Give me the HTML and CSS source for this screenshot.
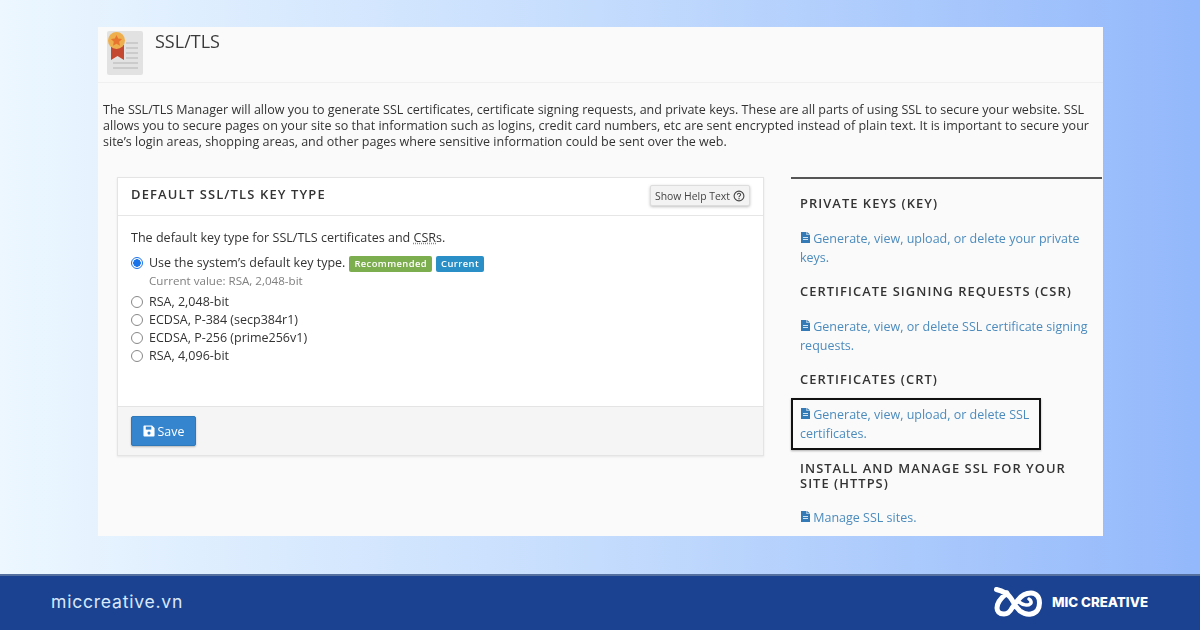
FILE: index.html
```html
<!DOCTYPE html>
<html lang="en">
<head>
<meta charset="utf-8">
<title>SSL/TLS</title>
<link rel="stylesheet" href="styles.css">
</head>
<body>
<main class="stage">
  <div class="shot">
    <header class="page-head">
      <svg class="cert-icon" width="36" height="44" viewBox="0 0 36 44">
        <rect width="36" height="44" rx="2" fill="#e2e2e2"/>
        <path d="M19 12h12M19 17h12M19 22h12M19 27h12M6 32h25M6 37h25" stroke="#b4b4b4" stroke-width="1"/>
        <path d="M4 14v15l6.500-4 6.500 4V14z" fill="#c4472f"/>
        <circle cx="9.500" cy="9.500" r="8.500" fill="#eeb04e"/>
        <path d="M9.500 4l1.700 3.600 3.900.5-2.900 2.700.8 3.900-3.500-1.900L6 14.700l.8-3.900-2.900-2.700 3.900-.5z" fill="#e8752f"/>
      </svg>
      <h1 class="page-title">SSL/TLS</h1>
    </header>
    <p class="intro">The SSL/TLS Manager will allow you to generate SSL certificates, certificate signing requests, and private keys. These are all parts of using SSL to secure your website. SSL allows you to secure pages on your site so that information such as logins, credit card numbers, etc are sent encrypted instead of plain text. It is important to secure your site’s login areas, shopping areas, and other pages where sensitive information could be sent over the web.</p>
    <div class="columns">
      <section class="card">
        <div class="card-head">
          <h2 class="card-title">DEFAULT SSL/TLS KEY TYPE</h2>
          <button class="help-btn" type="button">Show Help Text
            <svg width="12" height="12" viewBox="0 0 12 12"><circle cx="6" cy="6" r="4.900" fill="none" stroke="#444" stroke-width="1.100"/><path d="M4.400 4.800c0-2 3.200-2 3.200-.1 0 1.200-1.600 1.200-1.600 2.500" fill="none" stroke="#444" stroke-width="1.100"/><circle cx="6" cy="8.700" r=".7" fill="#444"/></svg>
          </button>
        </div>
        <div class="card-body">
          <p class="lead">The default key type for SSL/TLS certificates and <abbr class="abbr">CSR</abbr>s.</p>
          <div class="option">
            <span class="radio radio-on"></span>
            <span>Use the system’s default key type.</span>
            <span class="badge badge-green">Recommended</span>
            <span class="badge badge-blue">Current</span>
          </div>
          <div class="current">Current value: RSA, 2,048-bit</div>
          <div class="option"><span class="radio"></span><span>RSA, 2,048-bit</span></div>
          <div class="option"><span class="radio"></span><span>ECDSA, P-384 (secp384r1)</span></div>
          <div class="option"><span class="radio"></span><span>ECDSA, P-256 (prime256v1)</span></div>
          <div class="option"><span class="radio"></span><span>RSA, 4,096-bit</span></div>
        </div>
        <div class="card-foot">
          <button class="save-btn" type="button">
            <svg width="12" height="12" viewBox="0 0 13 13"><path d="M1.500 .5h8.300L12.500 3.200v8.300a1 1 0 0 1-1 1h-10a1 1 0 0 1-1-1v-10a1 1 0 0 1 1-1z" fill="#fff"/><rect x="3" y="1.800" width="6" height="3.200" fill="#3485cd"/><circle cx="6.500" cy="8.800" r="1.700" fill="#3485cd"/></svg>
            Save
          </button>
        </div>
      </section>
      <aside class="side">
        <h3 class="side-title">PRIVATE KEYS (KEY)</h3>
        <p class="side-link"><svg class="doc" viewBox="0 0 9 11"><path d="M0 0h5.500v3H9v8H0zM6.200 0L9 2.400H6.200z" fill="#337ab7"/><path d="M2 5.500h5M2 7.500h5" stroke="#fff" stroke-width=".8"/></svg> Generate, view, upload, or delete your private keys.</p>
        <h3 class="side-title">CERTIFICATE SIGNING REQUESTS (CSR)</h3>
        <p class="side-link"><svg class="doc" viewBox="0 0 9 11"><path d="M0 0h5.500v3H9v8H0zM6.200 0L9 2.400H6.200z" fill="#337ab7"/><path d="M2 5.500h5M2 7.500h5" stroke="#fff" stroke-width=".8"/></svg> Generate, view, or delete SSL certificate signing requests.</p>
        <h3 class="side-title">CERTIFICATES (CRT)</h3>
        <p class="side-link side-link-boxed"><svg class="doc" viewBox="0 0 9 11"><path d="M0 0h5.500v3H9v8H0zM6.200 0L9 2.400H6.200z" fill="#337ab7"/><path d="M2 5.500h5M2 7.500h5" stroke="#fff" stroke-width=".8"/></svg> Generate, view, upload, or delete SSL certificates.</p>
        <h3 class="side-title side-title-tight">INSTALL AND MANAGE SSL FOR YOUR SITE (HTTPS)</h3>
        <p class="side-link"><svg class="doc" viewBox="0 0 9 11"><path d="M0 0h5.500v3H9v8H0zM6.200 0L9 2.400H6.200z" fill="#337ab7"/><path d="M2 5.500h5M2 7.500h5" stroke="#fff" stroke-width=".8"/></svg> Manage SSL sites.</p>
      </aside>
    </div>
  </div>
</main>
<footer class="bar">
  <span class="site">miccreative.vn</span>
  <span class="brand">
    <svg width="48" height="30" viewBox="0 0 48 30"><g fill="none" stroke="#fff" stroke-width="5" stroke-linecap="round" stroke-linejoin="round"><path d="M2.500 2.500C8 4 13 6 16 10C20 15 21 20 26 24C30 27 34 27.500 37 27C43 26 45.500 21 45.500 16C45.500 10 42 6 37 6C31 6 27 9 24 13L18 21C16 25 13 27 10 27C5 27 3 24 3 21C3 15 8 10 13 6"/><path d="M25 15C29 18 34 19 36 17C38 16 37 13 35 12" stroke-width="3.500"/></g></svg>
    <span class="brand-name">MIC CREATIVE</span>
  </span>
</footer>
</body>
</html>
```
FILE: styles.css
```css
* { box-sizing: border-box; }
html, body { margin: 0; padding: 0; }
body {
  width: 1200px;
  height: 630px;
  overflow: hidden;
  display: flex;
  flex-direction: column;
  font-family: "Open Sans", "Liberation Sans", sans-serif;
  background: linear-gradient(90deg, #ecf7ff 0%, #c4dcfd 50%, #93b8fb 100%);
}
.stage { height: 574px; padding: 27px 97px 0 98px; }
.shot {
  height: 509px;
  overflow: hidden;
  background: #fafafa;
  color: #333;
  filter: blur(.35px);
}
.page-head {
  height: 56px;
  display: flex;
  align-items: flex-start;
  gap: 12px;
  padding: 4px 0 0 9px;
  border-bottom: 1px solid #f0f0f0;
}
.cert-icon { flex: none; }
.page-title { margin: 0; font-size: 18px; line-height: 20px; font-weight: 400; color: #3a3a3a; }
.intro { margin: 19px 0 0 5px; width: 992px; font-size: 12.54px; line-height: 16px; color: #333; }
.columns { display: flex; margin-top: 27px; padding-left: 19px; }
.card {
  width: 647px;
  height: 279px;
  display: flex;
  flex-direction: column;
  background: #fff;
  border: 1px solid #e4e4e4;
  box-shadow: 0 1px 2px rgba(0,0,0,.08);
}
.card-head {
  height: 38px;
  flex: none;
  display: flex;
  justify-content: space-between;
  align-items: center;
  padding: 0 13px 2px 13px;
  border-bottom: 1px solid #e6e6e6;
}
.card-title { margin: 0 0 3px; font-size: 12.95px; font-weight: 600; letter-spacing: 1.15px; color: #333; }
.help-btn {
  height: 21px;
  padding: 0 4px;
  display: flex;
  align-items: center;
  gap: 3px;
  font: 400 10.4px "Open Sans", sans-serif;
  color: #444;
  background: #f3f3f3;
  border: 1px solid #ddd;
  border-radius: 2px;
  box-shadow: 0 1px 3px rgba(0,0,0,.25);
}
.card-body { flex: 1; padding: 13px 13px 0; font-size: 12.5px; }
.lead { margin: 0 0 7px; line-height: 18px; font-size: 12.55px; }
.abbr { text-decoration: underline dotted #888; }
.option { display: flex; align-items: center; height: 18px; gap: 5px; line-height: 18px; }
.radio {
  flex: none;
  width: 12px;
  height: 12px;
  margin-right: 1px;
  border: 1px solid #888;
  border-radius: 50%;
  background: #fff;
}
.radio-on { border-color: #1a73e8; background: radial-gradient(circle, #1a73e8 0 3.5px, #fff 4px); }
.badge {
  height: 16px;
  margin-top: 2px;
  padding: 0 5px;
  font-size: 9.4px;
  font-weight: 600;
  line-height: 16px;
  letter-spacing: .42px;
  color: #fff;
  border-radius: 2px;
}
.badge-green { margin-left: -1px; background: #7cad4e; }
.badge-blue { margin-left: -1px; background: #2a8fc6; }
.current { height: 21px; padding-left: 18px; line-height: 18px; font-size: 11.6px; color: #808080; }
.card-foot {
  height: 49px;
  flex: none;
  padding: 9px 13px;
  background: #f5f5f5;
  border-top: 1px solid #e4e4e4;
}
.save-btn {
  width: 65px;
  height: 30px;
  display: flex;
  align-items: center;
  justify-content: center;
  gap: 3px;
  padding: 0;
  font: 400 12.4px "Open Sans", sans-serif;
  color: #fff;
  background: #3485cd;
  border: 1px solid #2f79bb;
  border-radius: 2px;
  box-shadow: 0 1px 2px rgba(0,0,0,.25);
}
.side {
  width: 311px;
  margin-left: 27px;
  padding: 17px 9px 0;
  border-top: 2px solid #555;
}
.side-title { margin: 0; font-size: 12.9px; line-height: 15px; font-weight: 600; letter-spacing: 1.05px; color: #333; }
.side-title-tight { margin-top: 11px; line-height: 14.5px; }
.side-link { margin: 19px 0 17px; font-size: 12.5px; line-height: 18.5px; color: #4c8bbd; }
.side-link-boxed {
  width: 250px;
  height: 52px;
  margin: 11px 0 0 -9px;
  padding: 6px 7px 0;
  border: 2px solid #111;
  box-shadow: 0 1px 2px rgba(0,0,0,.3);
}
.doc { width: 9px; height: 11px; margin-left: 1px; }
.bar {
  height: 56px;
  flex: none;
  display: flex;
  justify-content: space-between;
  align-items: center;
  padding: 0 52px 3px 51px;
  background: #1a4290;
  border-top: 2px solid #556f9f;
  color: #fff;
}
.site { font-family: Inter, sans-serif; font-size: 17.6px; letter-spacing: .75px; color: #d9e8fb; }
.brand { display: flex; align-items: center; gap: 10px; }
.brand-name { font-family: Inter, sans-serif; font-size: 13.3px; font-weight: 800; }
```
